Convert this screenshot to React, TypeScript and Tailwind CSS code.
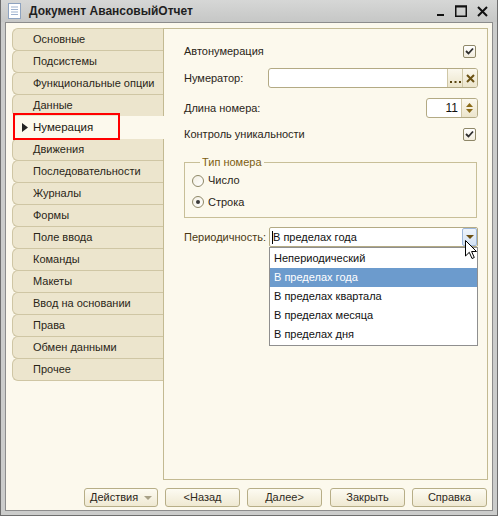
import React from "react";

const tabs = [
  "Основные",
  "Подсистемы",
  "Функциональные опции",
  "Данные",
  "Нумерация",
  "Движения",
  "Последовательности",
  "Журналы",
  "Формы",
  "Поле ввода",
  "Команды",
  "Макеты",
  "Ввод на основании",
  "Права",
  "Обмен данными",
  "Прочее",
];

const options = [
  "Непериодический",
  "В пределах года",
  "В пределах квартала",
  "В пределах месяца",
  "В пределах дня",
];

function Check() {
  return (
    <div className="w-[13px] h-[13px] rounded-[2px] border border-[#8f8868] bg-gradient-to-b from-[#ffffff] to-[#f1ecdc] flex items-center justify-center">
      <svg width="9" height="8" viewBox="0 0 9 8">
        <path d="M1 4 L3.5 6.5 L8 1.5" fill="none" stroke="#2e2e2e" strokeWidth="1.8" />
      </svg>
    </div>
  );
}

function Radio({ on }: { on?: boolean }) {
  return (
    <div className="w-[12px] h-[12px] rounded-full border border-[#8f8868] bg-gradient-to-br from-[#f3efe2] to-[#ffffff] flex items-center justify-center">
      {on && <div className="w-[4px] h-[4px] rounded-full bg-[#3a3a3a]" />}
    </div>
  );
}

function Btn({ children }: { children: React.ReactNode }) {
  return (
    <div className="w-[75px] h-[19px] rounded-[3px] border border-[#b7ae87] bg-gradient-to-b from-[#fdfbf2] to-[#efe9d2] flex items-center justify-center text-[11px] text-[#2f2a1c]">
      {children}
    </div>
  );
}

export default function App() {
  return (
    <div className="w-[498px] h-[516px] bg-[#cbcccb] border-x border-b border-[#6e6e6e] flex flex-col font-['Liberation_Sans',Arial,sans-serif] text-[11px] text-[#2a2518] overflow-hidden">
      {/* Title bar */}
      <div className="h-[22px] flex items-center pl-[7px] pr-[9px] bg-gradient-to-b from-[#d6d7d6] to-[#c6c7c6]">
        <svg width="13" height="16" viewBox="0 0 13 16">
          <rect x="0.5" y="0.5" width="12" height="15" fill="#ffffff" stroke="#8ea3c0" />
          <path d="M3 4h7M3 6.5h7M3 9h7M3 11.5h7" stroke="#9fb3cf" strokeWidth="1" />
        </svg>
        <span className="ml-[8px] font-bold text-[12px] text-[#1f1f1f]">Документ АвансовыйОтчет</span>
        <div className="ml-auto flex items-center gap-[10px]">
          <svg width="9" height="12" viewBox="0 0 9 12">
            <rect x="1" y="9" width="7" height="2" fill="#111" />
          </svg>
          <svg width="12" height="12" viewBox="0 0 12 12">
            <rect x="0.75" y="1.25" width="10.5" height="10" fill="none" stroke="#111" strokeWidth="1.5" />
            <rect x="0" y="0.5" width="12" height="2" fill="#111" />
          </svg>
          <svg width="11" height="11" viewBox="0 0 11 11">
            <path d="M1 1 L10 10 M10 1 L1 10" stroke="#111" strokeWidth="2" />
          </svg>
        </div>
      </div>

      {/* Client area */}
      <div className="flex-1 mx-[4px] mb-[4px] border border-[#8c8c8c] bg-[#fcf9ed] flex flex-col">
        <div className="flex pt-[5px] pl-[6px] pr-[4px] h-[458px]">
          {/* Tabs */}
          <div className="w-[151px] flex flex-col">
            {tabs.map((t, i) => {
              const sel = i === 4;
              if (sel) {
                return (
                  <div
                    key={t}
                    className="relative z-10 h-[23px] -mb-[1px] -mr-[1px] bg-[#fcf9ed] flex items-center pl-[10px]"
                  >
                    <div className="absolute left-[1px] top-[-3px] w-[107px] h-[27px] border-2 border-[#ff0000]" />
                    <svg width="6" height="9" viewBox="0 0 6 9">
                      <path d="M0 0 L6 4.5 L0 9 Z" fill="#222" />
                    </svg>
                    <span className="ml-[5px] text-[11.5px] text-[#1e1a10]">{t}</span>
                  </div>
                );
              }
              return (
                <div
                  key={t}
                  className="h-[23px] bg-[#ece5cd] border border-r-0 border-[#cfc6a4] rounded-l-[6px] -mb-[1px] flex items-center pl-[20px] text-[#2a2518]"
                >
                  {t}
                </div>
              );
            })}
          </div>

          {/* Page panel */}
          <div className="flex-1 h-[452px] border border-[#c3ba92] pl-[20px] pr-[9px] flex flex-col">
            <div className="mt-[13px] h-[18px] flex items-center justify-between">
              <span>Автонумерация</span>
              <div className="mr-[2px]">
                <Check />
              </div>
            </div>

            <div className="mt-[8px] h-[20px] flex items-center">
              <span className="w-[84px]">Нумератор:</span>
              <div className="flex-1 h-[20px] rounded-[3px] border border-[#b3aa84] bg-white flex justify-end overflow-hidden">
                <div className="w-[15px] h-full border-l border-[#cfc7a6] bg-gradient-to-b from-[#fbf8ee] to-[#ece5cc] flex items-end justify-center pb-[4px]">
                  <svg width="11" height="2" viewBox="0 0 11 2">
                    <rect x="0" y="0" width="2" height="2" fill="#5a4510" />
                    <rect x="4.5" y="0" width="2" height="2" fill="#5a4510" />
                    <rect x="9" y="0" width="2" height="2" fill="#5a4510" />
                  </svg>
                </div>
                <div className="w-[15px] h-full border-l border-[#cfc7a6] bg-gradient-to-b from-[#fbf8ee] to-[#ece5cc] flex items-center justify-center">
                  <svg width="9" height="9" viewBox="0 0 9 9">
                    <path d="M1 1 L8 8 M8 1 L1 8" stroke="#6b5214" strokeWidth="2" />
                  </svg>
                </div>
              </div>
            </div>

            <div className="mt-[10px] h-[20px] flex items-center justify-between">
              <span>Длина номера:</span>
              <div className="w-[52px] h-[20px] rounded-[3px] border border-[#b3aa84] bg-white flex overflow-hidden">
                <div className="flex-1 flex items-center justify-end pr-[3px] text-[12px] text-[#111]">11</div>
                <div className="w-[16px] h-full border-l border-[#cfc7a6] bg-gradient-to-b from-[#fbf8ee] to-[#ece5cc] flex flex-col items-center justify-center gap-[2px]">
                  <svg width="7" height="4" viewBox="0 0 7 4">
                    <path d="M0 4 L3.5 0 L7 4 Z" fill="#8a6a18" />
                  </svg>
                  <svg width="7" height="4" viewBox="0 0 7 4">
                    <path d="M0 0 L3.5 4 L7 0 Z" fill="#8a6a18" />
                  </svg>
                </div>
              </div>
            </div>

            <div className="mt-[6px] h-[20px] flex items-center justify-between">
              <span>Контроль уникальности</span>
              <div className="mr-[2px]">
                <Check />
              </div>
            </div>

            <fieldset className="mt-[11px] mr-[1px] border border-[#c8bf98] pl-[7px] pt-[1px] pb-[4px]">
              <legend className="ml-[8px] px-[2px] leading-[14px] text-[#7d5e12]">Тип номера</legend>
              <div className="h-[21px] flex items-center gap-[4px]">
                <Radio />
                <span>Число</span>
              </div>
              <div className="h-[22px] flex items-center gap-[4px]">
                <Radio on />
                <span>Строка</span>
              </div>
            </fieldset>

            <div className="mt-[9px] h-[20px] flex items-center">
              <span className="w-[85px] text-[#4a3812]">Периодичность:</span>
              <div className="relative flex-1 h-[20px] rounded-[2px] border border-[#b3aa84] bg-white flex">
                <div className="flex-1 flex items-center pl-[2px] text-[#111]">
                  <span className="w-[1px] h-[13px] bg-black" />
                  <span>В пределах года</span>
                </div>
                <div className="w-[15px] h-full rounded-[2px] border border-[#9db7da] bg-gradient-to-b from-[#eef4fb] to-[#d4e2f3] flex items-center justify-center">
                  <svg width="8" height="4" viewBox="0 0 8 4">
                    <path d="M0 0 L4 4 L8 0 Z" fill="#6b4f12" />
                  </svg>
                </div>

                {/* Dropdown list */}
                <div className="absolute left-[-1px] top-[19px] w-[209px] border border-[#8f8f8f] bg-white z-20 py-[1px]">
                  {options.map((o, i) => (
                    <div
                      key={o}
                      className={`h-[19px] flex items-center pl-[4px] ${i === 1 ? "bg-[#6c9bcd] text-white" : "text-[#111]"}`}
                    >
                      {o}
                    </div>
                  ))}
                </div>

                {/* Mouse cursor */}
                <svg className="absolute left-[195px] top-[12px] z-30" width="13" height="21" viewBox="0 0 13 21">
                  <path
                    d="M0.5 0.5 L0.5 16 L4.3 12.3 L7 18.5 L9.3 17.5 L6.6 11.5 L11.5 11.5 Z"
                    fill="#ffffff"
                    stroke="#000"
                    strokeWidth="1"
                  />
                </svg>
              </div>
            </div>
          </div>
        </div>

        {/* Footer buttons */}
        <div className="mt-[7px] pr-[5px] flex justify-end gap-[7px]">
          <div className="w-[74px] h-[19px] rounded-[3px] border border-[#b7ae87] bg-gradient-to-b from-[#fdfbf2] to-[#efe9d2] flex items-center pl-[5px] text-[#2a2518]">
            <span>Действия</span>
            <svg className="ml-auto mr-[5px]" width="8" height="4" viewBox="0 0 8 4">
              <path d="M0 0 L4 4 L8 0 Z" fill="#a8a187" />
            </svg>
          </div>
          <Btn>&lt;Назад</Btn>
          <Btn>Далее&gt;</Btn>
          <div className="ml-[1px]">
            <Btn>Закрыть</Btn>
          </div>
          <Btn>Справка</Btn>
        </div>
      </div>
    </div>
  );
}
